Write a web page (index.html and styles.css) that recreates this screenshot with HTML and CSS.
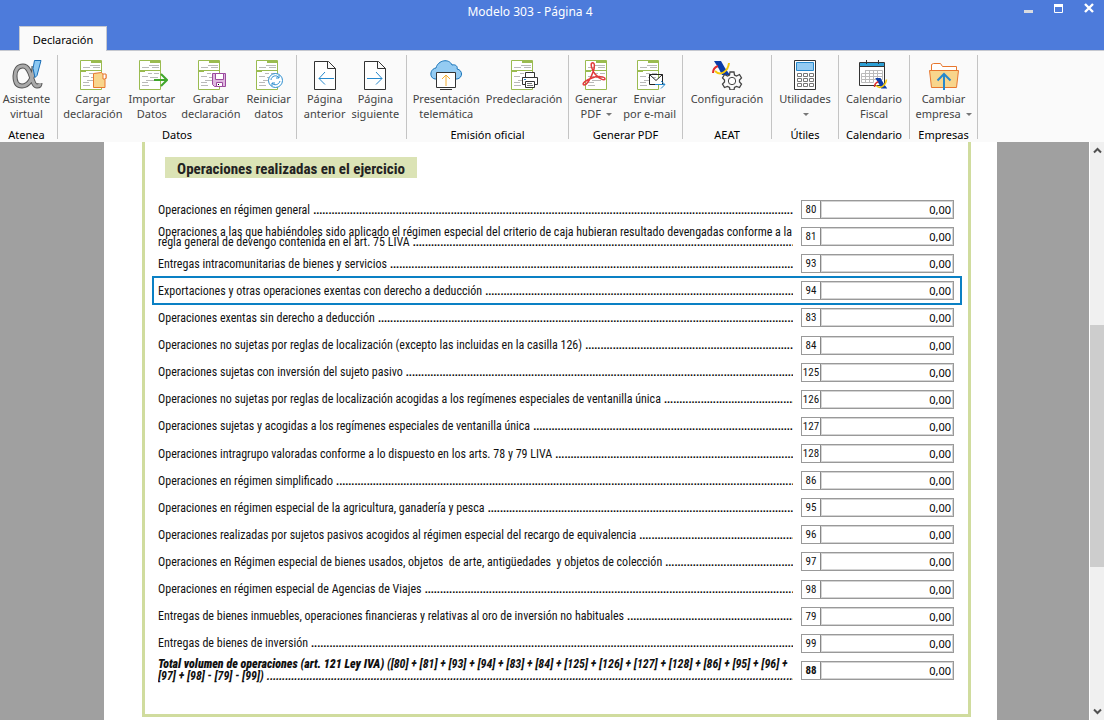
FILE: index.html
```html
<!DOCTYPE html>
<html lang="es">
<head>
<meta charset="utf-8">
<title>Modelo 303 - Página 4</title>
<link rel="stylesheet" href="styles.css">
</head>
<body>
<svg class="defs" aria-hidden="true">
  <symbol id="doc" viewBox="0 0 32 30">
    <path d="M3.500.5h21v29h-21zM3 10.500h22" fill="#fff" stroke="#9abb50"/>
    <path d="M14 1h10v2H14zM4 11h5v1H4z" fill="#9abb50"/>
    <path d="M13 5.500h10M6 7.500h7M16 7.500h7M12 13.500h4M18 13.500h5M6 16.500h6M14 17.500h8M10 20.500h9M6 22.500h6M6 25.500h7" stroke="#b9b9b9" fill="none"/>
  </symbol>
  <symbol id="page" viewBox="0 0 32 30">
    <path d="M5.500 1.500h14l7 7v21h-21zM18.500 1.500v7h8" fill="#fff" stroke="#333"/>
  </symbol>
  <symbol id="aeat" viewBox="0 0 24 18">
    <path d="M3 1h7l4 7 5 7h-8l-3-6z" fill="#0b3ca8"/>
    <path d="M7 6C4 7 2 9 2 13" stroke="#e32d2d" stroke-width="2" fill="none"/>
    <path d="M4 11c6 6 13 0 14-8" stroke="#f6c90a" stroke-width="2" fill="none"/>
  </symbol>
</svg>

<header class="titlebar">
  <h1 class="window-title">Modelo 303 - Página 4</h1>
  <div class="window-controls">
    <button class="winbtn" aria-label="Minimizar"><svg width="10" height="12"><path d="M0 8h9v3H0z" fill="#d9dbe0"/></svg></button>
    <button class="winbtn" aria-label="Maximizar"><svg width="10" height="12"><path d="M.5 3.500h8v7h-8z" fill="none" stroke="#fff"/><path d="M0 2h9v3H0z" fill="#fff"/></svg></button>
    <button class="winbtn" aria-label="Cerrar"><svg width="10" height="12"><path d="M1 2l8 8M9 2l-8 8" stroke="#fff" stroke-width="2.400"/></svg></button>
  </div>
  <button class="tab">Declaración</button>
</header>

<nav class="ribbon" aria-label="Herramientas">
  <section class="group">
    <div class="tools">
      <button class="tool"><svg class="icon" viewBox="0 0 32 30"><path d="M23 6C23 19 17 26 11 26 6 26 4 22 4 16S7 6 12 6c9 0 8 20 14 20 2 0 3-1 3-3" fill="none" stroke="#555" stroke-width="5"/><path d="M23 6C23 19 17 26 11 26 6 26 4 22 4 16S7 6 12 6c9 0 8 20 14 20 2 0 3-1 3-3" fill="none" stroke="#aaa" stroke-width="3"/><path d="M23.500.5h6.500l-4 15-2 2-2-9z" fill="#8cc8f2" stroke="#1a6db5"/></svg><span>Asistente<br>virtual</span></button>
    </div>
    <h2 class="group-title">Atenea</h2>
  </section>
  <section class="group">
    <div class="tools">
      <button class="tool"><svg class="icon" viewBox="0 0 32 30"><use href="#doc"/><path d="M16.500 13.500l8-1 1.500 2h3v4l-1 1v8h-11.500z" fill="#f8d58c" stroke="#e8772e"/><path d="M26 14h3v4l-1 1h-2z" fill="#fff" stroke="#e8772e"/></svg><span>Cargar<br>declaración</span></button>
      <button class="tool"><svg class="icon" viewBox="0 0 32 30"><use href="#doc"/><path d="M18 20h13M25 14l6 6-6 6" stroke="#3fa62b" stroke-width="2" fill="none"/></svg><span>Importar<br>Datos</span></button>
      <button class="tool"><svg class="icon" viewBox="0 0 32 30"><use href="#doc"/><path d="M17.500 13.500h13v13h-11l-2-2z" fill="#dfb8e0" stroke="#9b4a9e"/><path d="M20.500 13.500h8v6h-8zM21.500 22.500h6v4h-6z" fill="#fff" stroke="#9b4a9e"/><path d="M23 24h1v1h-1z"/></svg><span>Grabar<br>declaración</span></button>
      <button class="tool"><svg class="icon" viewBox="0 0 32 30"><use href="#doc"/><circle cx="22.500" cy="20.500" r="7" fill="#fff" stroke="#2e8fd0"/><path d="M18 20c0-4 6-6 8-2M27 21c-1 4-6 5-8 2M26 15v3h-3M19 26v-3h3" fill="none" stroke="#2e8fd0"/></svg><span>Reiniciar<br>datos</span></button>
    </div>
    <h2 class="group-title">Datos</h2>
  </section>
  <section class="group">
    <div class="tools">
      <button class="tool"><svg class="icon" viewBox="0 0 32 30"><use href="#page"/><path d="M25 18.500H10M16 12l-6 6.500 6 6" fill="none" stroke="#2688cc"/></svg><span>Página<br>anterior</span></button>
      <button class="tool"><svg class="icon" viewBox="0 0 32 30"><use href="#page"/><path d="M8 18.500h15M17 12l6 6.500-6 6" fill="none" stroke="#2688cc"/></svg><span>Página<br>siguiente</span></button>
    </div>
  </section>
  <section class="group">
    <div class="tools">
      <button class="tool"><svg class="icon" viewBox="0 0 32 30"><path d="M7 19C-1 20-1 9 6 8 8 0 19-2 22 5c4-1 6 2 5 4 6 1 6 9 0 10z" fill="#94cbf2" stroke="#1672b8"/><path d="M6.500 12.500h19v15h-19z" fill="#fff" stroke="#333"/><path d="M10 29.500h12" stroke="#333"/><path d="M16 26V15M12 19l4-4 4 4" stroke="#f5ae31" fill="none"/></svg><span>Presentación<br>telemática</span></button>
      <button class="tool"><svg class="icon" viewBox="0 0 32 30"><use href="#doc"/><path d="M17.500 17.500v-5h9v5M17.500 24.500h-3v-7h15v7h-3M17.500 21.500h9v6h-9z" fill="#fff" stroke="#333"/><path d="M19 23.500h5M19 25.500h6" stroke="#777"/><path d="M16 19h2v1h-2z" fill="#2688cc"/></svg><span>Predeclaración</span></button>
    </div>
    <h2 class="group-title">Emisión oficial</h2>
  </section>
  <section class="group">
    <div class="tools">
      <button class="tool"><svg class="icon" viewBox="0 0 32 30"><g transform="translate(2)"><use href="#doc" width="32" height="30"/></g><path d="M12 3c3-1 3 4 1 9-2 6-6 13-9 13-3-1 2-5 8-7 5-2 13-2 13 1 0 2-6 0-10-5-3-4-5-10-3-11z" fill="none" stroke="#e23a3a" stroke-width="1.500"/></svg><span>Generar<br>PDF <i class="caret"></i></span></button>
      <button class="tool"><svg class="icon" viewBox="0 0 32 30"><use href="#doc"/><path d="M15.500 14.500h13v10h-13zM15.500 14.500l6.500 6 6.500-6" fill="#fff" stroke="#222"/><path d="M21 24.500h10M27 21l4 3.500-4 4" fill="none" stroke="#2688cc"/></svg><span>Enviar<br>por e-mail</span></button>
    </div>
    <h2 class="group-title">Generar PDF</h2>
  </section>
  <section class="group">
    <div class="tools">
      <button class="tool"><svg class="icon" viewBox="0 0 32 30"><use href="#aeat" x="0" y="0" width="24" height="18"/><path d="M19 12h4l.5 3 2 1 3-1.500 2 3.500-2 2v2l2 2-2 3.500-3-1-2 1-.5 2.500h-4l-.5-2.500-2-1-3 1-2-3.500 2-2v-2l-2-2 2-3.500 3 1.500 2-1z" fill="#fafafa" stroke="#444" stroke-width="1.300"/><circle cx="21" cy="21" r="3.700" fill="#fff" stroke="#444"/></svg><span>Configuración</span></button>
    </div>
    <h2 class="group-title">AEAT</h2>
  </section>
  <section class="group">
    <div class="tools">
      <button class="tool"><svg class="icon" viewBox="0 0 32 30"><path d="M5.500.5h21v29h-21z" fill="#fff" stroke="#333"/><path d="M7.500 2.500h17v8h-17z" fill="#94cbf2" stroke="#2688cc"/><path d="M8.500 13.500h4v3h-4zM14.500 13.500h4v3h-4zM20.500 13.500h4v3h-4zM8.500 18.500h4v3h-4zM14.500 18.500h4v3h-4zM20.500 18.500h4v3h-4zM8.500 23.500h4v3h-4zM14.500 23.500h4v3h-4zM20.500 23.500h4v3h-4z" fill="#fff" stroke="#777"/></svg><span>Utilidades<br><i class="caret"></i></span></button>
    </div>
    <h2 class="group-title">Útiles</h2>
  </section>
  <section class="group">
    <div class="tools">
      <button class="tool"><svg class="icon" viewBox="0 0 32 30"><path d="M1.500 2.500h25v23h-25z" fill="#fff" stroke="#333"/><path d="M2 3h24v3H2z" fill="#2c9fd4"/><path d="M1 6.500h26M8.500 0v4M20.500 0v4" stroke="#333"/><path d="M7.500 10.500h17v9h-21v-6h21M3.500 16.500h21M3.500 19.500v3h12v-12M7.500 10v13M11.500 10v13M19.500 10v9" fill="none" stroke="#bbb"/><use href="#aeat" x="15" y="17" width="18" height="14"/></svg><span>Calendario<br>Fiscal</span></button>
    </div>
    <h2 class="group-title">Calendario</h2>
  </section>
  <section class="group">
    <div class="tools">
      <button class="tool"><svg class="icon" viewBox="0 0 32 30"><path d="M3.500 10V4.500l2-1h7l2 3h14V10" fill="#fff" stroke="#e8772e"/><path d="M1.500 10.500h29l-2 17h-25z" fill="#f8d58c" stroke="#e8772e"/><path d="M16 30V14M9.500 20.500L16 14l6.500 6.500" fill="none" stroke="#2688cc" stroke-width="2"/></svg><span>Cambiar<br>empresa <i class="caret"></i></span></button>
    </div>
    <h2 class="group-title">Empresas</h2>
  </section>
</nav>

<main class="workspace">
  <div class="sheet">
    <form class="panel">
      <h2 class="heading">Operaciones realizadas en el ejercicio</h2>
      <div class="rows">
        <div class="row"><label class="label" for="c80"><span class="line leader">Operaciones en régimen general</span></label><div class="cell"><span class="code">80</span><input class="amount" id="c80" value="0,00"></div></div>
        <div class="row"><label class="label dense" for="c81"><span class="line">Operaciones a las que habiéndoles sido aplicado el régimen especial del criterio de caja hubieran resultado devengadas conforme a la</span><span class="line leader">regla general de devengo contenida en el art. 75 LIVA</span></label><div class="cell"><span class="code">81</span><input class="amount" id="c81" value="0,00"></div></div>
        <div class="row"><label class="label" for="c93"><span class="line leader">Entregas intracomunitarias de bienes y servicios</span></label><div class="cell"><span class="code">93</span><input class="amount" id="c93" value="0,00"></div></div>
        <div class="row selected"><label class="label" for="c94"><span class="line leader">Exportaciones y otras operaciones exentas con derecho a deducción</span></label><div class="cell"><span class="code">94</span><input class="amount" id="c94" value="0,00"></div></div>
        <div class="row"><label class="label" for="c83"><span class="line leader">Operaciones exentas sin derecho a deducción</span></label><div class="cell"><span class="code">83</span><input class="amount" id="c83" value="0,00"></div></div>
        <div class="row"><label class="label" for="c84"><span class="line leader">Operaciones no sujetas por reglas de localización (excepto las incluidas en la casilla 126)</span></label><div class="cell"><span class="code">84</span><input class="amount" id="c84" value="0,00"></div></div>
        <div class="row"><label class="label" for="c125"><span class="line leader">Operaciones sujetas con inversión del sujeto pasivo</span></label><div class="cell"><span class="code">125</span><input class="amount" id="c125" value="0,00"></div></div>
        <div class="row"><label class="label" for="c126"><span class="line leader">Operaciones no sujetas por reglas de localización acogidas a los regímenes especiales de ventanilla única</span></label><div class="cell"><span class="code">126</span><input class="amount" id="c126" value="0,00"></div></div>
        <div class="row"><label class="label" for="c127"><span class="line leader">Operaciones sujetas y acogidas a los regímenes especiales de ventanilla única</span></label><div class="cell"><span class="code">127</span><input class="amount" id="c127" value="0,00"></div></div>
        <div class="row"><label class="label" for="c128"><span class="line leader">Operaciones intragrupo valoradas conforme a lo dispuesto en los arts. 78 y 79 LIVA</span></label><div class="cell"><span class="code">128</span><input class="amount" id="c128" value="0,00"></div></div>
        <div class="row"><label class="label" for="c86"><span class="line leader">Operaciones en régimen simplificado</span></label><div class="cell"><span class="code">86</span><input class="amount" id="c86" value="0,00"></div></div>
        <div class="row"><label class="label" for="c95"><span class="line leader">Operaciones en régimen especial de la agricultura, ganadería y pesca</span></label><div class="cell"><span class="code">95</span><input class="amount" id="c95" value="0,00"></div></div>
        <div class="row"><label class="label" for="c96"><span class="line leader">Operaciones realizadas por sujetos pasivos acogidos al régimen especial del recargo de equivalencia</span></label><div class="cell"><span class="code">96</span><input class="amount" id="c96" value="0,00"></div></div>
        <div class="row"><label class="label" for="c97"><span class="line leader">Operaciones en Régimen especial de bienes usados, objetos&nbsp; de arte, antigüedades&nbsp; y objetos de colección</span></label><div class="cell"><span class="code">97</span><input class="amount" id="c97" value="0,00"></div></div>
        <div class="row"><label class="label" for="c98"><span class="line leader">Operaciones en régimen especial de Agencias de Viajes</span></label><div class="cell"><span class="code">98</span><input class="amount" id="c98" value="0,00"></div></div>
        <div class="row"><label class="label" for="c79"><span class="line leader">Entregas de bienes inmuebles, operaciones financieras y relativas al oro de inversión no habituales</span></label><div class="cell"><span class="code">79</span><input class="amount" id="c79" value="0,00"></div></div>
        <div class="row"><label class="label" for="c99"><span class="line leader">Entregas de bienes de inversión</span></label><div class="cell"><span class="code">99</span><input class="amount" id="c99" value="0,00"></div></div>
        <div class="row total"><label class="label" for="c88"><span class="line"><b>Total volumen de operaciones (art. 121 Ley IVA)</b> ([80] + [81] + [93] + [94] + [83] + [84] + [125] + [126] + [127] + [128] + [86] + [95] + [96] +</span><span class="line leader">[97] + [98] - [79] - [99])</span></label><div class="cell"><span class="code">88</span><input class="amount" id="c88" value="0,00"></div></div>
      </div>
    </form>
  </div>
  <div class="scrollbar">
    <button class="arrow" aria-label="Subir"><svg width="9" height="7"><path d="M1 5.500l3.500-3.500L8 5.500" fill="none" stroke="#505050" stroke-width="2"/></svg></button>
    <div class="track"><div class="thumb"></div></div>
    <button class="arrow" aria-label="Bajar"><svg width="9" height="7"><path d="M1 1.500L4.500 5 8 1.500" fill="none" stroke="#505050" stroke-width="2"/></svg></button>
  </div>
</main>
</body>
</html>
```
FILE: styles.css
```css
* { box-sizing: border-box; }

body {
  margin: 0;
  min-height: 100vh;
  display: flex;
  flex-direction: column;
  font-family: "Noto Sans", "Open Sans", sans-serif;
  font-size: 11px;
  color: #000;
  background: #fafafa;
}

button {
  margin: 0;
  padding: 0;
  border: 0;
  background: none;
  font: inherit;
  color: inherit;
}

svg { display: block; }
.defs { position: absolute; width: 0; height: 0; }

.titlebar {
  display: grid;
  grid-template-columns: 1fr auto 1fr;
  grid-template-rows: 26px 24px;
  background: #4d7bdb;
  border-bottom: 1px solid #c5c8d0;
}

.window-title {
  grid-column: 2;
  margin: 0;
  padding-right: 44px;
  font-size: 12px;
  font-weight: 400;
  line-height: 24px;
  color: #fff;
}

.window-controls {
  grid-column: 3;
  display: flex;
  justify-content: flex-end;
  align-items: flex-start;
  gap: 20px;
  padding: 2px 10px 0 0;
}

.tab {
  grid-column: 1;
  grid-row: 2;
  justify-self: start;
  width: 88px;
  margin: 0 0 -1px 19px;
  border: 1px solid #c5c8d0;
  border-bottom: 0;
  background: #fafafa;
}

.ribbon {
  display: grid;
  grid-template-columns: 58px 239px 110px 162px 114px 89px 67px 71px 68px;
  height: 91px;
  padding: 4px 0 3px;
}

.group {
  display: flex;
  flex-direction: column;
  justify-content: space-between;
  border-right: 1px solid #c4c4c4;
}

.group:first-child { padding-right: 4px; }

.tools {
  display: flex;
  justify-content: center;
  align-items: flex-start;
  gap: 6px;
  padding-top: 5px;
}

.tool {
  flex: none;
  display: flex;
  flex-direction: column;
  align-items: center;
  gap: 1px;
  line-height: 15px;
  text-align: center;
  color: #444;
}

.icon { width: 32px; height: 30px; }

.caret {
  display: inline-block;
  margin-left: 2px;
  border: 3px solid transparent;
  border-top-color: #777;
  border-bottom: 0;
  vertical-align: 2px;
}

.group-title {
  margin: 0;
  font-size: 11px;
  font-weight: 400;
  line-height: 8px;
  text-align: center;
}

.workspace {
  flex: 1;
  display: grid;
  grid-template-columns: 104fr 893fr 92fr 15px;
  background: #a0a0a0;
}

.sheet {
  grid-column: 2;
  display: flex;
  padding: 0 26px 3px 38px;
  background: #fff;
}

.panel {
  flex: 1;
  display: flex;
  flex-direction: column;
  padding: 15px 14px 30px 13px;
  border: 3px solid #d0dc9e;
  border-top: 0;
}

.heading {
  align-self: flex-start;
  width: 252px;
  margin: 0 0 18px 7px;
  padding-top: 4px;
  background: #dbe3b5;
  font: bold 15px/17px "Roboto Condensed", "Liberation Sans Narrow", sans-serif;
  text-align: center;
  color: #222;
}

.rows {
  flex: 1;
  display: grid;
  grid-auto-rows: 1fr;
}

.row {
  position: relative;
  display: grid;
  grid-template-columns: 1fr 153px;
  align-items: center;
  gap: 8px;
  font: 12px/16px "Roboto Condensed", "Liberation Sans Narrow", sans-serif;
  color: #111;
}

.row.selected::after {
  content: "";
  position: absolute;
  inset: -1px -8px -1px -6px;
  border: 2px solid #0a80c4;
  pointer-events: none;
}

.label { min-width: 0; }

.line {
  display: block;
  white-space: nowrap;
}

.leader { overflow-x: clip; }

.leader::after {
  content: " ................................................................................................................................................................................................";
  font-family: "Liberation Sans", sans-serif;
  font-size: 11px;
  font-weight: 700;
}

.dense { line-height: 10px; }

.total {
  line-height: 12px;
  font-style: italic;
  font-weight: 700;
}

.cell {
  display: grid;
  grid-template-columns: 19px 1fr;
  height: 19px;
  border: 1px solid #999;
}

.code {
  border-right: 1px solid #888;
  font-size: 11px;
  font-style: normal;
  line-height: 17px;
  text-align: center;
}

.amount {
  width: 100%;
  min-width: 0;
  margin: 0;
  padding: 1px 1px 0 0;
  border: 1px solid #d4d4d4;
  background: #fff;
  font: 11px/14px "Noto Sans", "Open Sans", sans-serif;
  text-align: right;
  color: #000;
}

.scrollbar {
  grid-column: 4;
  display: flex;
  flex-direction: column;
  background: #f0f0f0;
  border-left: 1px solid #fff;
}

.arrow {
  display: flex;
  justify-content: center;
  align-items: center;
  height: 17px;
}

.track {
  flex: 1;
  display: grid;
  grid-template-rows: 166fr 242fr 136fr;
}

.thumb {
  grid-row: 2;
  background: #cdcdcd;
}
```
